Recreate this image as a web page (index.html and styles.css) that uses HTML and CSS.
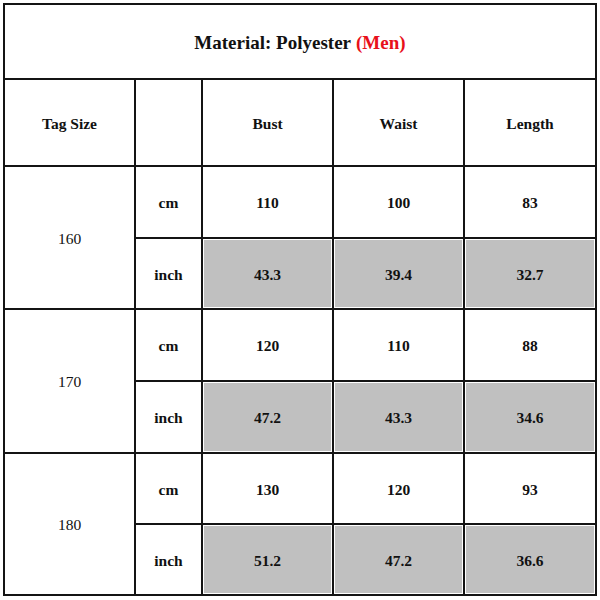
FILE: index.html
```html
<!DOCTYPE html>
<html>
<head>
<meta charset="utf-8">
<link rel="stylesheet" href="styles.css">
</head>
<body>
<div class="sheet">
  <div class="c title">Material: Polyester <span class="red">(Men)</span></div>
  <div class="c">Tag Size</div>
  <div class="c"></div>
  <div class="c">Bust</div>
  <div class="c">Waist</div>
  <div class="c">Length</div>

  <div class="c tag">160</div>
  <div class="c">cm</div>
  <div class="c">110</div>
  <div class="c">100</div>
  <div class="c">83</div>
  <div class="c">inch</div>
  <div class="c g">43.3</div>
  <div class="c g">39.4</div>
  <div class="c g">32.7</div>

  <div class="c tag">170</div>
  <div class="c">cm</div>
  <div class="c">120</div>
  <div class="c">110</div>
  <div class="c">88</div>
  <div class="c">inch</div>
  <div class="c g">47.2</div>
  <div class="c g">43.3</div>
  <div class="c g">34.6</div>

  <div class="c tag">180</div>
  <div class="c">cm</div>
  <div class="c">130</div>
  <div class="c">120</div>
  <div class="c">93</div>
  <div class="c">inch</div>
  <div class="c g">51.2</div>
  <div class="c g">47.2</div>
  <div class="c g">36.6</div>
</div>
</body>
</html>
```
FILE: styles.css
```css
html, body {
  margin: 0;
  padding: 0;
  background: #fff;
}
.sheet {
  margin: 3px 0 0 3px;
  width: 590px;
  display: grid;
  grid-template-columns: 129px 65px 129px 129px 130px;
  grid-template-rows: 73px 85px 70px 69px 70px 70px 69px 69px;
  gap: 2px;
  padding: 2px;
  background: #141414;
  font-family: "Liberation Serif", "Times New Roman", serif;
  font-weight: bold;
  font-size: 15.5px;
  color: #111;
}
.c {
  background: #fff;
  display: flex;
  align-items: center;
  justify-content: center;
  padding-top: 2px;
}
.title {
  grid-column: 1 / span 5;
  font-size: 19px;
}
.red {
  color: #e8101a;
  margin-left: 5px;
}
.tag {
  grid-row: span 2;
  font-weight: normal;
}
.g {
  background: #c0c0c0;
  box-shadow: inset 0 0 0 1px #fff;
}
```
